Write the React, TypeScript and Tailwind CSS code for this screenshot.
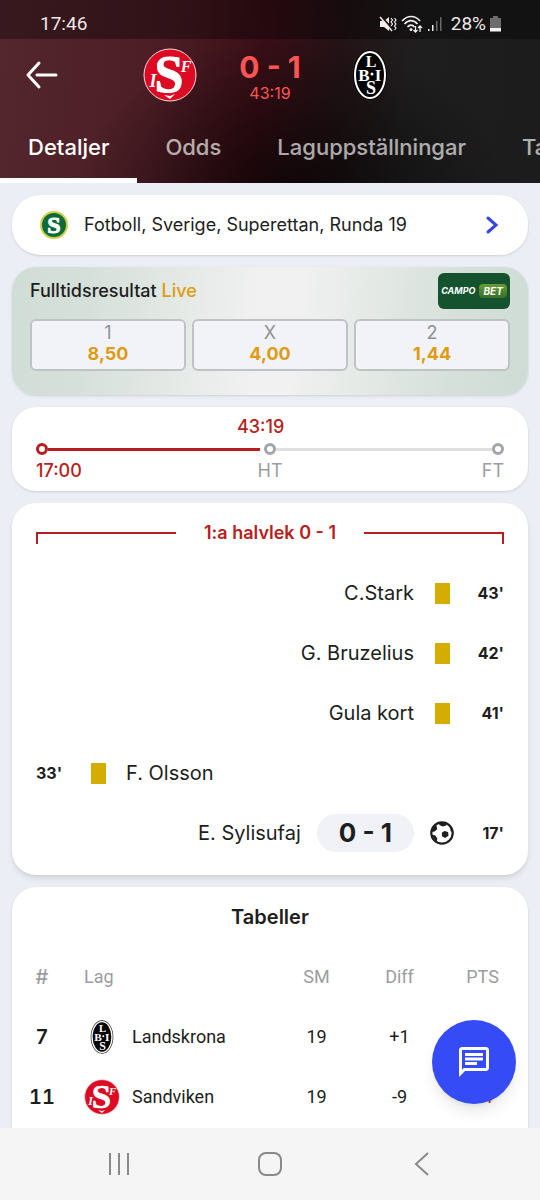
import clsx from "clsx";
import { useState } from "react";
import { MdOutlineChat } from "react-icons/md";

type Side = "home" | "away";

type MatchEvent = {
  side: Side;
  player: string;
  minute: string;
  kind: "card" | "goal";
  score?: string;
};

const TABS = ["Detaljer", "Odds", "Laguppställningar", "Tabeller"];

const ODDS = [
  { label: "1", value: "8,50" },
  { label: "X", value: "4,00" },
  { label: "2", value: "1,44" },
];

const EVENTS: MatchEvent[] = [
  { side: "away", player: "C.Stark", minute: "43'", kind: "card" },
  { side: "away", player: "G. Bruzelius", minute: "42'", kind: "card" },
  { side: "away", player: "Gula kort", minute: "41'", kind: "card" },
  { side: "home", player: "F. Olsson", minute: "33'", kind: "card" },
  { side: "away", player: "E. Sylisufaj", minute: "17'", kind: "goal", score: "0 - 1" },
];

const STANDINGS = [
  { rank: 7, team: "Landskrona", played: 19, diff: "+1", points: "", logo: <LandskronaLogo className="h-9 w-9" ring="#ffffff" edge="#222222" /> },
  { rank: 11, team: "Sandviken", played: 19, diff: "-9", points: "24", logo: <SandvikenLogo className="h-9 w-9" /> },
];

// share of the first half that has been played
const HALF_PROGRESS = 98;
const CLOCK_POSITION = 48;

function SandvikenLogo({ className }: { className?: string }) {
  return (
    <svg viewBox="0 0 54 54" className={className} aria-hidden="true">
      <circle cx="27" cy="27" r="26" fill="#dc0a22" stroke="#fbd7da" strokeWidth="1" />
      <g fill="#fff" fontFamily="Liberation Serif, serif" fontWeight="700" textAnchor="middle">
        <text x="26" y="44" fontSize="52" stroke="#fff" strokeWidth="1">S</text>
        <text x="43" y="24" fontSize="16" fontStyle="italic">F</text>
        <text x="10" y="39" fontSize="18" fontStyle="italic">I</text>
      </g>
      <path d="M21 47l6 1 5-2-5 5z" fill="#fff" />
    </svg>
  );
}

function LandskronaLogo({ className, ring, edge }: { className?: string; ring: string; edge: string }) {
  return (
    <svg viewBox="0 0 54 54" className={className} aria-hidden="true">
      <ellipse cx="27" cy="27" rx="17" ry="25" fill={edge} />
      <ellipse cx="27" cy="27" rx="15" ry="23" fill="#050505" stroke={ring} strokeWidth="2" />
      <g fill="#fff" fontFamily="Liberation Serif, serif" fontWeight="700" textAnchor="middle">
        <text x="28" y="19" fontSize="16">L</text>
        <text x="21" y="33" fontSize="17">B</text>
        <text x="35" y="33" fontSize="17">I</text>
        <text x="28" y="46" fontSize="18">S</text>
      </g>
      <circle cx="29" cy="26" r="1.5" fill="#fff" />
    </svg>
  );
}

function SuperettanLogo() {
  return (
    <svg viewBox="0 0 28 28" className="h-7 w-7" aria-hidden="true">
      <circle cx="14" cy="14" r="13" fill="#0b6b3a" stroke="#d3cd48" strokeWidth="2" />
      <text x="14" y="22" fontSize="24" fontWeight="700" fontFamily="Liberation Serif, serif" textAnchor="middle" fill="#fff" stroke="#fff" strokeWidth="1">
        S
      </text>
    </svg>
  );
}

function BallIcon() {
  return (
    <svg viewBox="0 0 24 24" className="h-6 w-6" role="img" aria-label="Mål">
      <circle cx="12" cy="12" r="10.7" fill="#fff" stroke="#1d1e20" strokeWidth="2.2" />
      <path d="M14.4 10l3.7 1 .4 3.8-3.3 2.2-3.2-1.7-.2-3.5z" fill="#1d1e20" />
      <path d="M9 1.5l7 .2.3 2.7-3.6 1.2L9.3 4zM2.5 7l3.8-3 .9 4.2-3 2.6-3-.3zM1.5 14l3.6.3 2.3 3.2-.9 3.4zM20 6l3 5-2.3-.8z" fill="#1d1e20" />
    </svg>
  );
}

function StatusBar() {
  return (
    <div className="flex h-[39px] items-center justify-between bg-black/35 pt-2 pr-[39px] pl-10 font-[Roboto,sans-serif] text-[19px] leading-6 text-[#eee8e9]">
      <span>17:46</span>
      <div className="flex items-center gap-1">
        <svg viewBox="0 0 18 16" className="h-4 w-[18px]" fill="none" aria-hidden="true">
          <path d="M1 5h4l5-4v14l-5-4H1z" fill="#eee" />
          <path d="M2 0l12 14" stroke="#251012" strokeWidth="2" />
          <path d="M1 1l12 14" stroke="#eee" strokeWidth="1.5" />
          <path d="M12 2l1.5 2-1.5 2 1.5 2-1.5 2M15.5 2L17 4l-1.5 2L17 8l-1.5 2L17 12l-1.5 2" stroke="#eee" strokeWidth="1.2" />
        </svg>
        <svg viewBox="0 0 22 18" className="h-[18px] w-[22px]" fill="none" stroke="#eee" aria-hidden="true">
          <path d="M1 6c5.5-6 13-6 18 0M3.5 9c4-4.500 9-4.500 13 0M6.500 12c2-2.500 5-2.500 7 0" strokeWidth="1.7" />
          <circle cx="10" cy="14.5" r="1.5" fill="#eee" stroke="none" />
          <path d="M14.5 11v6M12.5 15l2 2 2-2M19 17v-6M17 13l2-2 2 2" strokeWidth="1.3" />
        </svg>
        <svg viewBox="0 0 16 16" className="h-4 w-4" aria-hidden="true">
          <path d="M1 13h1.5v2H1zM5 9h1.5v6H5z" fill="#eee" />
          <path d="M9 5h1.5v10H9zM13 1h1.5v14H13z" fill="#6b6768" />
        </svg>
        <span className="ml-1">28%</span>
        <svg viewBox="0 0 11 16" className="h-4 w-[11px]" aria-hidden="true">
          <path d="M3 0h5v2h3v10H0V2h3z" fill="#6c6c6c" />
          <path d="M0 12h11v3.500H0z" fill="#f4f4f4" />
        </svg>
      </div>
    </div>
  );
}

function MatchHeader() {
  const [tab, setTab] = useState(TABS[0]);

  return (
    <header className="bg-[radial-gradient(ellipse_40%_90%_at_54%_110%,#000000b3,transparent),linear-gradient(97deg,#54262e_0%,#4c1d25_30%,#3a0e16_48%,#231316_62%,#1f1e1e_75%,#1c1c1c_100%)]">
      <StatusBar />
      <div className="grid h-[72px] grid-cols-[1fr_100px_100px_100px_1fr] items-center">
        <button type="button" aria-label="Tillbaka" className="pl-6">
          <svg viewBox="0 0 36 30" className="h-[30px] w-9" fill="none" stroke="#fff" strokeWidth="3" strokeLinecap="round" strokeLinejoin="round" aria-hidden="true">
            <path d="M15 3L4 15l11 12M13 15h19" />
          </svg>
        </button>
        <SandvikenLogo className="h-[54px] w-[54px] justify-self-center" />
        <div className="pt-1 text-center text-[#ff5452]">
          <p className="text-[30px] leading-8 font-bold">0 - 1</p>
          <p className="text-base leading-5">43:19</p>
        </div>
        <LandskronaLogo className="h-[54px] w-[54px] justify-self-center" ring="#ffffff" edge="#050505" />
      </div>
      <nav className="flex overflow-hidden whitespace-nowrap">
        {TABS.map((name) => (
          <button
            key={name}
            type="button"
            onClick={() => setTab(name)}
            className={clsx(
              "h-[72px] shrink-0 border-b-5 px-7 pt-1.5 text-[22px] font-medium",
              tab === name ? "border-white text-white" : "border-transparent text-white/65"
            )}
          >
            {name}
          </button>
        ))}
      </nav>
    </header>
  );
}

function OddsCard() {
  return (
    <section className="rounded-3xl bg-[linear-gradient(97deg,#d0ddd6_0%,#d6e0da_15%,#f1f1f1_48%,#f0f1f0_55%,#d6e0da_85%,#cedcd5_100%)] px-[18px] pt-1.5 pb-6 shadow">
      <div className="mb-2.5 flex items-center justify-between">
        <h2 className="text-lg leading-6 font-medium">
          Fulltidsresultat <span className="text-[#dd9c12]">Live</span>
        </h2>
        <a href="#campobet" className="flex h-9 w-[72px] items-center justify-center gap-1 rounded-md bg-[#15532f] text-[9px] font-bold text-white italic">
          CAMPO
          <span className="rounded bg-linear-to-b from-[#6a9c36] to-[#356f2a] px-1 text-[10px] leading-[14px]">BET</span>
        </a>
      </div>
      <div className="grid grid-cols-3 gap-1.5">
        {ODDS.map((odd) => (
          <button key={odd.label} type="button" className="h-[52px] rounded-md border-2 border-[#c0c3c6] bg-[#f2f3f8] pb-1 text-lg leading-[21px]">
            <span className="block text-[#8f9193]">{odd.label}</span>
            <span className="block font-bold text-[#dd9c12]">{odd.value}</span>
          </button>
        ))}
      </div>
    </section>
  );
}

function Dot({ active }: { active?: boolean }) {
  return (
    <span className={clsx("h-3 w-3 shrink-0 rounded-full border-3 bg-white", active ? "border-[#b81d20]" : "border-[#9fa5ab]")} />
  );
}

function TimelineCard() {
  return (
    <section className="rounded-3xl bg-white px-6 py-2 text-lg leading-6 shadow">
      <div className="text-center font-medium text-[#b81d20]" style={{ width: `${CLOCK_POSITION * 2}%` }}>
        43:19
      </div>
      <div className="flex h-5 items-center">
        <Dot active />
        <div className="h-[3px] flex-1">
          <div className="h-full bg-[#b81d20]" style={{ width: `${HALF_PROGRESS}%` }} />
        </div>
        <Dot />
        <div className="h-[3px] flex-1 bg-[#dedfe0]" />
        <Dot />
      </div>
      <div className="grid grid-cols-3 text-[#9b9da0]">
        <span className="font-medium text-[#b81d20]">17:00</span>
        <span className="text-center">HT</span>
        <span className="text-right">FT</span>
      </div>
    </section>
  );
}

function EventRow({ event }: { event: MatchEvent }) {
  return (
    <li className={clsx("flex h-[60px] items-center gap-4", event.side === "away" && "flex-row-reverse")}>
      <span className={clsx("w-[34px] text-base font-bold", event.side === "away" && "text-right")}>{event.minute}</span>
      <span className="flex w-6 justify-center">
        {event.kind === "goal" ? <BallIcon /> : <span className="h-[21px] w-[15px] bg-[#d3ad02]" />}
      </span>
      {event.score && (
        <span className="rounded-full bg-[#f1f2f7] px-[22px] text-[26px] leading-[38px] font-bold">{event.score}</span>
      )}
      <span className="text-xl">{event.player}</span>
    </li>
  );
}

function EventsCard() {
  return (
    <section className="rounded-3xl bg-white px-6 pb-3 shadow-md">
      <div className="flex h-[60px] items-center gap-7 text-[#b81d20]">
        <span className="mt-2.5 h-3 flex-1 border-t-2 border-l-2 border-current" />
        <h2 className="text-lg font-semibold">1:a halvlek 0 - 1</h2>
        <span className="mt-2.5 h-3 flex-1 border-t-2 border-r-2 border-current" />
      </div>
      <ul>
        {EVENTS.map((event) => (
          <EventRow key={event.minute} event={event} />
        ))}
      </ul>
    </section>
  );
}

function StandingsCard() {
  return (
    <section className="flex-1 rounded-t-3xl bg-white shadow">
      <h2 className="text-center text-xl leading-[60px] font-semibold">Tabeller</h2>
      <div className="pr-1">
        <table className="w-full table-fixed text-center font-[Roboto,sans-serif] text-lg">
          <thead className="text-[#9b9da0]">
            <tr className="h-[60px]">
              <th className="w-[60px] font-[Inter,sans-serif] text-xl font-medium">#</th>
              <th className="pl-3 text-left font-normal">Lag</th>
              <th className="w-[83px] font-normal">SM</th>
              <th className="w-[83px] font-normal">Diff</th>
              <th className="w-[83px] font-normal">PTS</th>
            </tr>
          </thead>
          <tbody>
            {STANDINGS.map((row) => (
              <tr key={row.rank} className="h-[60px]">
                <td className="font-[Inter,sans-serif] text-xl font-semibold tabular-nums">{row.rank}</td>
                <td className="pl-3">
                  <span className="flex items-center gap-3">
                    {row.logo}
                    {row.team}
                  </span>
                </td>
                <td>{row.played}</td>
                <td>{row.diff}</td>
                <td className="text-[#b81d20]">{row.points}</td>
              </tr>
            ))}
          </tbody>
        </table>
      </div>
    </section>
  );
}

function SystemNav() {
  return (
    <nav className="grid h-[72px] grid-cols-3 bg-[#f5f5f5] px-11">
      <button type="button" aria-label="Senaste" className="flex items-center justify-center">
        <svg viewBox="0 0 24 24" className="h-6 w-6" stroke="#88898a" strokeWidth="2" aria-hidden="true">
          <path d="M3 1v22M12 1v22M21 1v22" />
        </svg>
      </button>
      <button type="button" aria-label="Hem" className="flex items-center justify-center">
        <svg viewBox="0 0 24 24" className="h-6 w-6" fill="none" stroke="#88898a" strokeWidth="2" aria-hidden="true">
          <rect x="1" y="1" width="22" height="22" rx="7" />
        </svg>
      </button>
      <button type="button" aria-label="Bakåt" className="flex items-center justify-center">
        <svg viewBox="0 0 24 24" className="h-6 w-6" fill="none" stroke="#88898a" strokeWidth="2" aria-hidden="true">
          <path d="M19 1L7 12l12 11" />
        </svg>
      </button>
    </nav>
  );
}

export default function App() {
  return (
    <div className="flex min-h-screen flex-col bg-[#ebeef4] font-[Inter,sans-serif] text-[#1d1e20]">
      <MatchHeader />
      <main className="flex flex-1 flex-col gap-3 px-3 pt-3">
        <a href="#superettan" className="flex h-[60px] items-center gap-4 rounded-[28px] bg-white pr-7 pl-7 text-lg shadow">
          <SuperettanLogo />
          <span className="flex-1">Fotboll, Sverige, Superettan, Runda 19</span>
          <svg viewBox="0 0 16 20" className="h-5 w-4" fill="none" stroke="#3646dc" strokeWidth="3" strokeLinecap="round" aria-hidden="true">
            <path d="M4 3l8 7-8 7" />
          </svg>
        </a>
        <OddsCard />
        <TimelineCard />
        <EventsCard />
        <StandingsCard />
      </main>
      <SystemNav />
      <button
        type="button"
        aria-label="Chatt"
        className="fixed right-6 bottom-24 flex h-[84px] w-[84px] items-center justify-center rounded-full bg-[#354bf5] text-white shadow-lg"
      >
        <MdOutlineChat size={36} />
      </button>
    </div>
  );
}
